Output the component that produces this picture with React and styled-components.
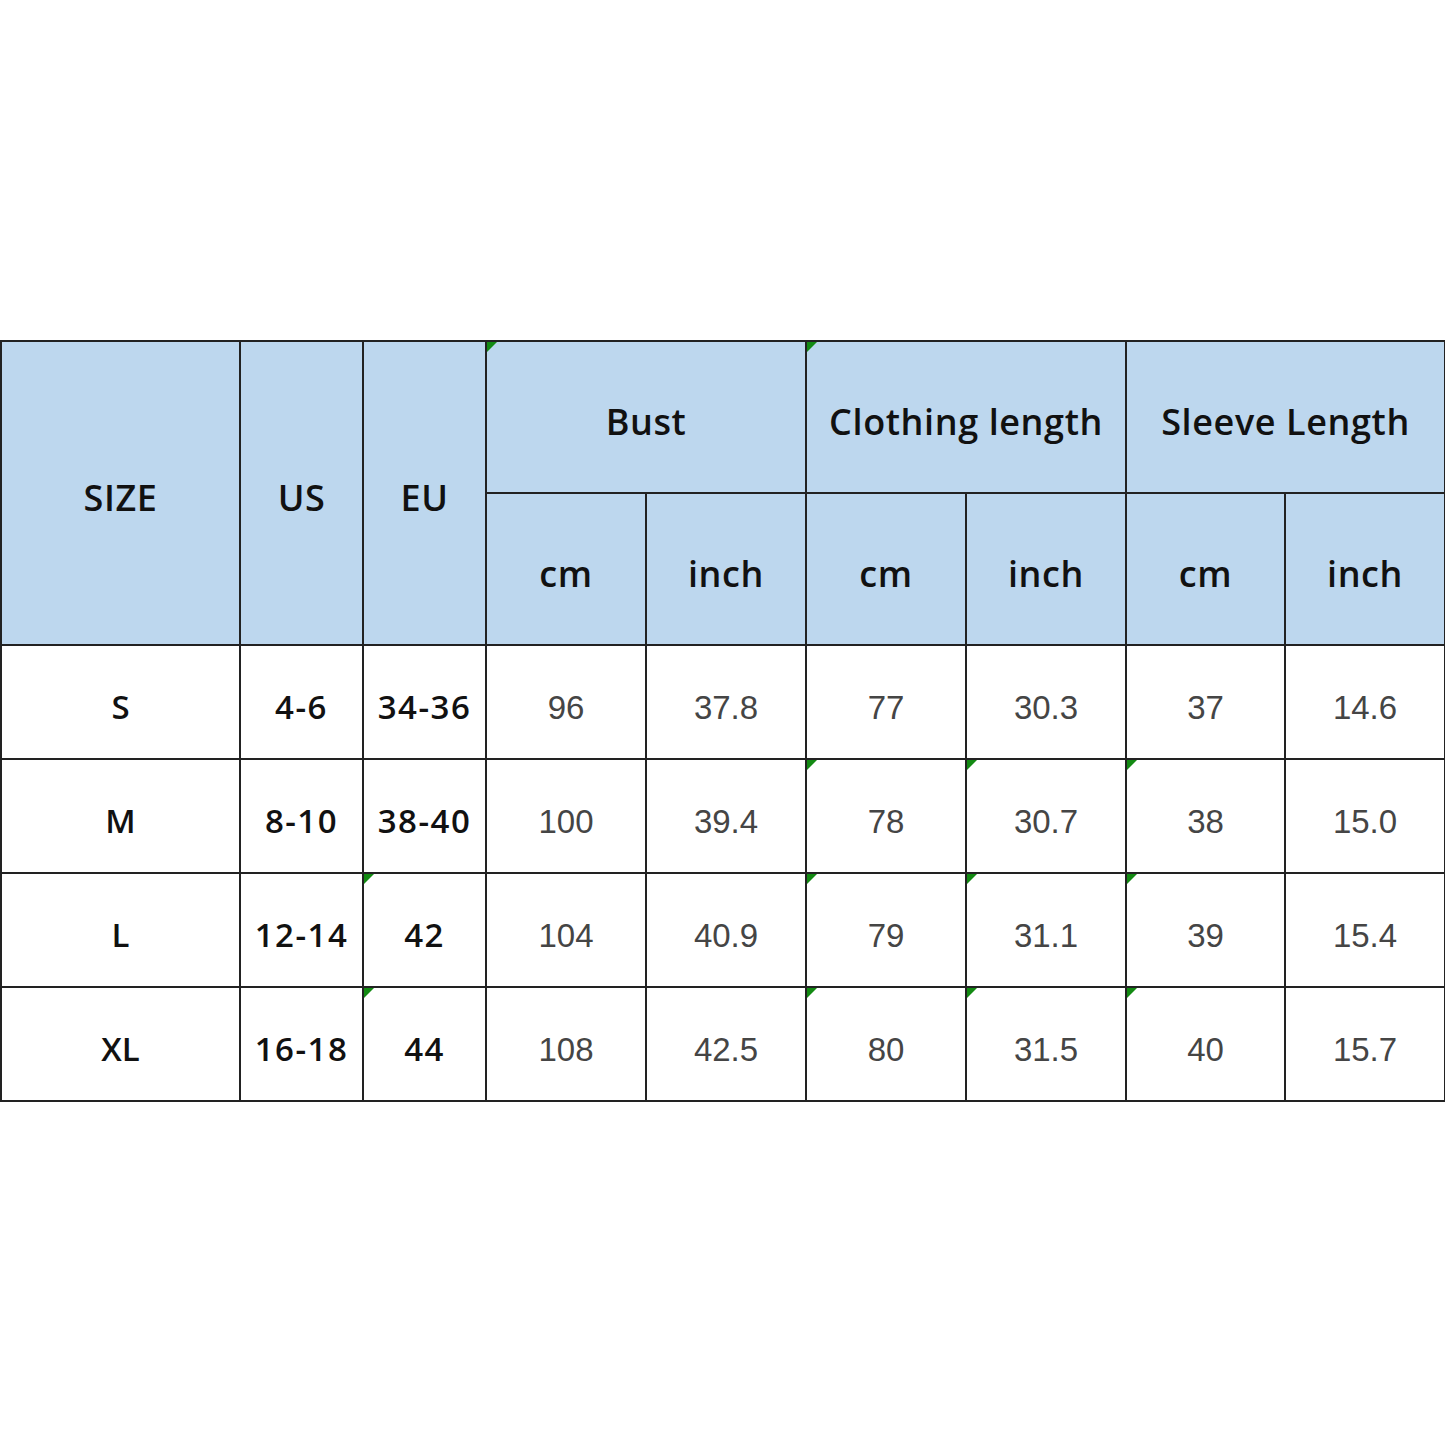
import React from "react";
import styled, { createGlobalStyle } from "styled-components";

const GlobalStyle = createGlobalStyle`
  html, body {
    margin: 0;
    padding: 0;
    background: #ffffff;
  }
`;

const widths = [239, 123, 123, 160, 160, 160, 160, 159, 160];

// marks = column indexes whose cell carries the little green corner
const rows = [
  { size: "S", us: "4-6", eu: "34-36", vals: ["96", "37.8", "77", "30.3", "37", "14.6"], marks: [] },
  { size: "M", us: "8-10", eu: "38-40", vals: ["100", "39.4", "78", "30.7", "38", "15.0"], marks: [5, 6, 7] },
  { size: "L", us: "12-14", eu: "42", vals: ["104", "40.9", "79", "31.1", "39", "15.4"], marks: [2, 5, 6, 7] },
  { size: "XL", us: "16-18", eu: "44", vals: ["108", "42.5", "80", "31.5", "40", "15.7"], marks: [2, 5, 6, 7] },
];

function App() {
  return (
    <Page>
      <GlobalStyle />
      <Table>
        <colgroup>
          {widths.map((w, i) => (
            <col key={i} style={{ width: w }} />
          ))}
        </colgroup>
        <thead>
          <HeadRow>
            <Th rowSpan={2}>SIZE</Th>
            <Th rowSpan={2}>US</Th>
            <Th rowSpan={2}>EU</Th>
            <Th colSpan={2} $mark>Bust</Th>
            <Th colSpan={2} $mark>Clothing length</Th>
            <Th colSpan={2}>Sleeve Length</Th>
          </HeadRow>
          <HeadRow>
            <Th>cm</Th>
            <Th>inch</Th>
            <Th>cm</Th>
            <Th>inch</Th>
            <Th>cm</Th>
            <Th>inch</Th>
          </HeadRow>
        </thead>
        <tbody>
          {rows.map((r) => (
            <BodyRow key={r.size}>
              <KeyTd>{r.size}</KeyTd>
              <KeyTd $range>{r.us}</KeyTd>
              <KeyTd $range $mark={r.marks.includes(2)}>{r.eu}</KeyTd>
              {r.vals.map((v, i) => (
                <Td key={i} $mark={r.marks.includes(i + 3)}>
                  {v}
                </Td>
              ))}
            </BodyRow>
          ))}
        </tbody>
      </Table>
    </Page>
  );
}

export default App;

const Page = styled.div`
  width: 1445px;
  height: 1445px;
  padding-top: 340px;
  box-sizing: border-box;
  background: #ffffff;
`;

const Table = styled.table`
  width: 1444px;
  table-layout: fixed;
  border-collapse: collapse;
`;

const HeadRow = styled.tr`
  height: 152px;
`;

const BodyRow = styled.tr`
  height: 114px;
`;

const Cell = `
  position: relative;
  border: 2px solid #222222;
  text-align: center;
  vertical-align: middle;
  padding: 8px 0 0 0;
  white-space: nowrap;
`;

const markStyle = `
  &::before {
    content: "";
    position: absolute;
    top: 0;
    left: 0;
    width: 0;
    height: 0;
    border-top: 10px solid #138a13;
    border-right: 10px solid transparent;
  }
`;

const Th = styled.th`
  ${Cell}
  background: #bdd7ee;
  color: #111111;
  font-family: "Open Sans", "Noto Sans", sans-serif;
  font-weight: 600;
  font-size: 36px;
  letter-spacing: 0.6px;
  ${({ $mark }) => ($mark ? markStyle : "")}
`;

const KeyTd = styled.td`
  ${Cell}
  color: #111111;
  font-family: "Open Sans", "Noto Sans", sans-serif;
  font-weight: 600;
  font-size: 33px;
  letter-spacing: ${({ $range }) => ($range ? "1.5px" : "0")};
  ${({ $mark }) => ($mark ? markStyle : "")}
`;

const Td = styled.td`
  ${Cell}
  padding-top: 12px;
  color: #454545;
  font-family: "Liberation Sans", Arial, sans-serif;
  font-weight: 400;
  font-size: 33px;
  ${({ $mark }) => ($mark ? markStyle : "")}
`;
